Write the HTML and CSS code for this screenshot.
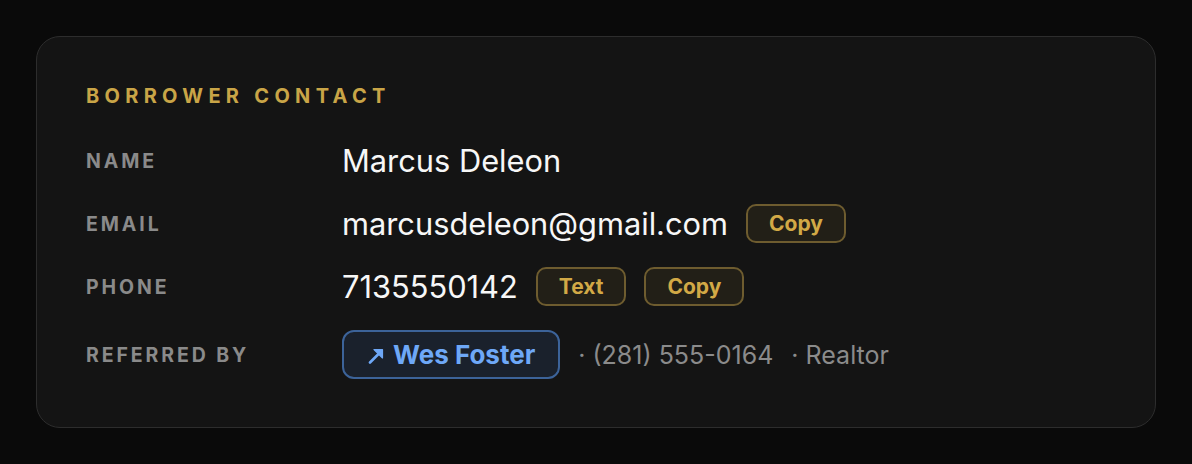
FILE: index.html
```html
<!DOCTYPE html>
<html lang="en">
<head>
<meta charset="utf-8">
<title>Borrower Contact</title>
<link rel="stylesheet" href="styles.css">
</head>
<body>
  <section class="card">
    <h2 class="card-title">Borrower Contact</h2>
    <div class="rows">
      <div class="label">Name</div>
      <div class="value"><span class="value-text">Marcus Deleon</span></div>

      <div class="label">Email</div>
      <div class="value">
        <span class="value-text">marcusdeleon@gmail.com</span>
        <button class="btn-gold">Copy</button>
      </div>

      <div class="label">Phone</div>
      <div class="value">
        <span class="value-text">7135550142</span>
        <button class="btn-gold">Text</button>
        <button class="btn-gold">Copy</button>
      </div>

      <div class="label">Referred By</div>
      <div class="value">
        <a class="btn-link" href="#"><svg class="arrow" width="16" height="16" viewBox="0 0 16 16" aria-hidden="true"><path d="M2 14.5 L11 5.5" stroke="currentColor" stroke-width="2.6" stroke-linecap="round"/><path d="M6 1.5 H14.5 V10 Z" fill="currentColor" stroke="currentColor" stroke-width="1.2" stroke-linejoin="round"/></svg>Wes Foster</a>
        <span class="meta">· (281) 555-0164</span>
        <span class="meta">· Realtor</span>
      </div>
    </div>
  </section>
</body>
</html>
```

FILE: styles.css
```css
* { box-sizing: border-box; }

html, body {
  margin: 0;
  background: #0a0a0a;
}

body {
  padding: 36px;
  font-family: Inter, "Noto Sans", "Liberation Sans", sans-serif;
  color: #f5f5f5;
}

.card {
  width: 1120px;
  height: 392px;
  background: #141414;
  border: 1px solid #2d2d2d;
  border-radius: 24px;
  padding: 47px 49px 46px;
}

.card-title {
  margin: 0 0 32px;
  font-size: 20px;
  line-height: 25px;
  font-weight: 700;
  letter-spacing: 5.3px;
  text-transform: uppercase;
  color: #c9a547;
}

.rows {
  display: grid;
  grid-template-columns: 256px 1fr;
  row-gap: 24px;
  align-items: center;
}

.label {
  font-size: 19.5px;
  font-weight: 700;
  letter-spacing: 2.9px;
  text-transform: uppercase;
  color: #8a8a8a;
}

.value {
  display: flex;
  align-items: center;
  gap: 18px;
  min-height: 39px;
}

.value-text {
  font-size: 30.8px;
  line-height: 39px;
  color: #f7f7f7;
}

.btn-gold {
  height: 39px;
  padding: 0 21px;
  border: 2px solid #6e5c2f;
  border-radius: 10px;
  background: #221f17;
  color: #d2a946;
  font-family: inherit;
  font-size: 21px;
  font-weight: 700;
}

.btn-link {
  display: inline-flex;
  align-items: center;
  gap: 9px;
  height: 49px;
  padding: 0 23px 0 24px;
  border: 2px solid #3c6399;
  border-radius: 12px;
  background: #1a212c;
  color: #6ea8f7;
  font-size: 26px;
  font-weight: 700;
  text-decoration: none;
}

.arrow {
  display: block;
  margin-top: 3px;
}

.meta {
  font-size: 25px;
  color: #8b8b8b;
}
```
